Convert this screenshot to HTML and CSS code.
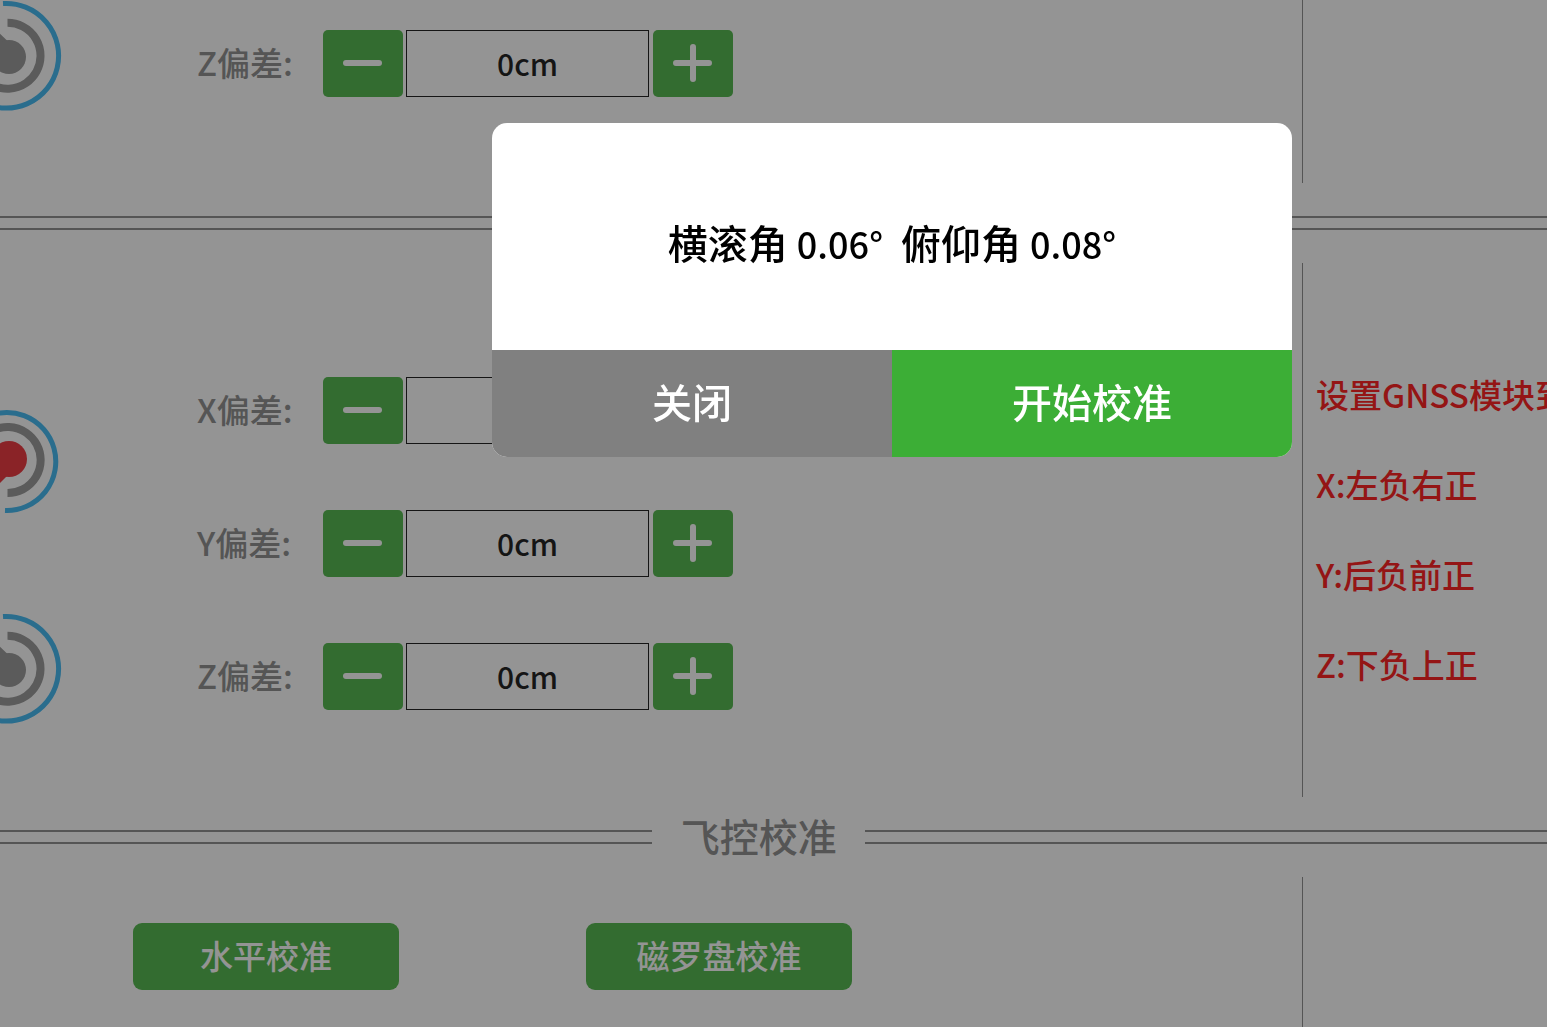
FILE: index.html
```
<!DOCTYPE html>
<html lang="zh-CN">
<head>
  <meta charset="UTF-8">
  <title>飞控校准</title>
  <link rel="stylesheet" href="styles.css">
</head>
<body>
  <main class="page">
    <section class="panel panel-top">
      <svg class="drone" width="80" height="183" viewBox="0 0 80 183" aria-hidden="true">
        <g id="motor">
          <path class="ring" d="M3 3.6 A52.3 52.3 0 1 1 -20 101"/>
          <path class="arc" d="M7.5 22.8 A33 33 0 1 1 -20 74"/>
          <path class="hub" d="M-5 29 L7 40.5 L9 57 L-5 66 Z"/>
          <circle class="hub" cx="9" cy="57" r="17"/>
        </g>
      </svg>
      <div class="rows">
        <div class="row">
          <label for="antZ">Z偏差:</label>
          <button class="step" aria-label="减"><svg width="40" height="40" viewBox="0 0 40 40"><path d="M3 20 H36"/></svg></button>
          <input id="antZ" type="text" value="0cm">
          <button class="step" aria-label="加"><svg width="40" height="40" viewBox="0 0 40 40"><path d="M3 20 H36 M20 4 V36"/></svg></button>
        </div>
      </div>
      <div class="notes"></div>
    </section>

    <div class="divider"><i></i><i></i></div>

    <section class="panel panel-gnss">
      <svg class="drone" width="80" height="534" viewBox="0 0 80 534" aria-hidden="true">
        <path class="ring" d="M-20 157.5 A49 49 0 1 1 5 247.5"/>
        <path class="arc" d="M-20 179 A33 33 0 1 1 7.5 230"/>
        <path class="hub red" d="M-5 225 L7 213 L9 196 L-5 186 Z"/>
        <circle class="hub red" cx="9" cy="196" r="18"/>
        <use href="#motor" y="350"/>
      </svg>
      <div class="rows">
        <div class="row">
          <label for="gnssX">X偏差:</label>
          <button class="step" aria-label="减"><svg width="40" height="40" viewBox="0 0 40 40"><path d="M3 20 H36"/></svg></button>
          <input id="gnssX" type="text" value="">
          <button class="step" aria-label="加"><svg width="40" height="40" viewBox="0 0 40 40"><path d="M3 20 H36 M20 4 V36"/></svg></button>
        </div>
        <div class="row">
          <label for="gnssY">Y偏差:</label>
          <button class="step" aria-label="减"><svg width="40" height="40" viewBox="0 0 40 40"><path d="M3 20 H36"/></svg></button>
          <input id="gnssY" type="text" value="0cm">
          <button class="step" aria-label="加"><svg width="40" height="40" viewBox="0 0 40 40"><path d="M3 20 H36 M20 4 V36"/></svg></button>
        </div>
        <div class="row">
          <label for="gnssZ">Z偏差:</label>
          <button class="step" aria-label="减"><svg width="40" height="40" viewBox="0 0 40 40"><path d="M3 20 H36"/></svg></button>
          <input id="gnssZ" type="text" value="0cm">
          <button class="step" aria-label="加"><svg width="40" height="40" viewBox="0 0 40 40"><path d="M3 20 H36 M20 4 V36"/></svg></button>
        </div>
      </div>
      <div class="notes">
        <p>设置GNSS模块到</p>
        <p>X:左负右正</p>
        <p>Y:后负前正</p>
        <p>Z:下负上正</p>
      </div>
    </section>

    <div class="divider"><i></i><h2>飞控校准</h2><i></i></div>

    <section class="panel panel-calib">
      <div class="actions">
        <button class="calib">水平校准</button>
        <button class="calib">磁罗盘校准</button>
      </div>
      <div class="notes"></div>
    </section>
  </main>

  <div class="mask">
    <div class="dialog" role="dialog" aria-modal="true">
      <p class="angles">横滚角 <span class="num">0.06°</span>&nbsp; 俯仰角 <span class="num">0.08°</span></p>
      <div class="dialog-btns">
        <button class="close">关闭</button>
        <button class="start">开始校准</button>
      </div>
    </div>
  </div>
</body>
</html>
```
FILE: styles.css
```
* {
  box-sizing: border-box;
}
body {
  margin: 0;
  height: 100vh;
  overflow: hidden;
  background: #fff;
  color: #808080;
  font-family: "Noto Sans CJK SC", sans-serif;
  font-size: 33px;
  font-weight: 500;
}
button, input {
  font: inherit;
  border: none;
  padding: 0 0 4px;
}
button {
  color: #fff;
  background: #3cae36;
  cursor: pointer;
}
h2, p {
  margin: 0;
}

.page {
  display: flex;
  flex-direction: column;
  min-height: 100vh;
}
.panel {
  display: grid;
  grid-template-columns: 197px 1fr 245px;
}
.panel-calib {
  grid-template-columns: 1fr 245px;
  flex: 1;
}
.drone {
  display: block;
}
.ring, .arc {
  fill: none;
  stroke: #2bb0f0;
  stroke-width: 5;
}
.arc {
  stroke: #8c8c8c;
  stroke-width: 8;
}
.hub { fill: #8c8c8c; }
.red { fill: #ea1c24; }

/* 偏差设置 */
.rows {
  display: flex;
  flex-direction: column;
  gap: 66px;
  padding: 30px 0 86px;
}
.panel-gnss .rows {
  padding-top: 114px;
}
.row {
  display: flex;
  align-items: center;
  height: 67px;
}
.row label {
  width: 126px;
  padding-bottom: 4px;
}
.step {
  display: flex;
  align-items: center;
  justify-content: center;
  width: 80px;
  height: 67px;
  padding-bottom: 2px;
  border-radius: 5px;
}
.step path {
  fill: none;
  stroke: #fff;
  stroke-width: 6;
  stroke-linecap: round;
}
.row input {
  width: 243px;
  height: 67px;
  margin: 0 4px 0 3px;
  padding-bottom: 2px;
  border: 1px solid #000;
  background: #fff;
  color: #000;
  font-size: 30px;
  text-align: center;
}

.notes {
  display: flex;
  flex-direction: column;
  justify-content: center;
  border-left: 1px solid #808080;
  padding: 0 0 2px 13px;
  color: #f00;
  line-height: 90px;
  white-space: nowrap;
  overflow: hidden;
}

/* 双线标题 */
.divider {
  display: flex;
  align-items: center;
  height: 80px;
}
.divider i {
  flex: 22;
  height: 14px;
  border: solid #808080;
  border-width: 2px 0;
}
.divider h2 {
  width: 213px;
  padding-bottom: 4px;
  font-size: 39px;
  font-weight: 500;
  line-height: 76px;
  text-align: center;
}
.divider h2 + i {
  flex: 23;
}

.actions {
  display: flex;
  gap: 187px;
  padding: 46px 0 37px 133px;
}
.calib {
  width: 266px;
  height: 67px;
  border-radius: 9px;
}

/* 弹窗 */
.mask {
  position: fixed;
  inset: 0;
  display: flex;
  justify-content: center;
  align-items: flex-start;
  padding: 123px 0 0 237px;
  background: rgba(41, 41, 41, 0.5);
}
.dialog {
  width: 800px;
  border-radius: 15px;
  background: #fff;
  overflow: hidden;
  font-size: 40px;
}
.angles {
  padding: 89px 0 78px;
  line-height: 60px;
  color: #000;
  text-align: center;
}
.num {
  font-size: 36px;
  line-height: 1;
}
.dialog-btns {
  display: flex;
}
.dialog-btns button {
  flex: 1;
  height: 107px;
  padding-bottom: 6px;
}
.dialog-btns .close {
  background: #808080;
}
```
